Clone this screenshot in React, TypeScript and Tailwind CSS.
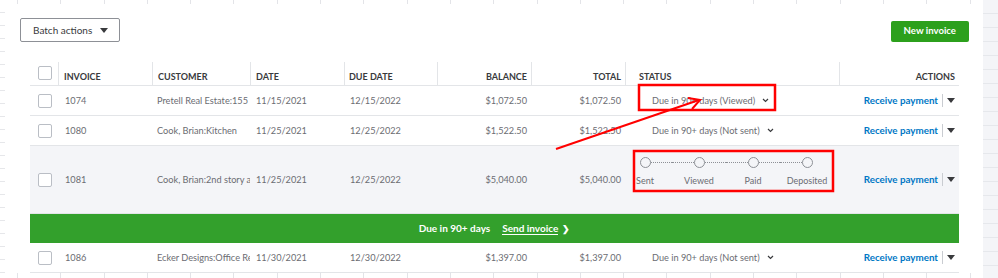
import React from 'react';

const font = { fontFamily: 'Lato, "Liberation Sans", Arial, sans-serif' };

type Row = {
  id: string;
  customer: string;
  date: string;
  due: string;
  balance: string;
  total: string;
  status?: string;
  expanded?: boolean;
};

const rows: Row[] = [
  { id: '1074', customer: 'Pretell Real Estate:155 Main', date: '11/15/2021', due: '12/15/2022', balance: '$1,072.50', total: '$1,072.50', status: 'Due in 90+ days (Viewed)' },
  { id: '1080', customer: 'Cook, Brian:Kitchen', date: '11/25/2021', due: '12/25/2022', balance: '$1,522.50', total: '$1,522.50', status: 'Due in 90+ days (Not sent)' },
  { id: '1081', customer: 'Cook, Brian:2nd story addition', date: '11/25/2021', due: '12/25/2022', balance: '$5,040.00', total: '$5,040.00', expanded: true },
];

const lastRow: Row = { id: '1086', customer: 'Ecker Designs:Office Remodel', date: '11/30/2021', due: '12/30/2022', balance: '$1,397.00', total: '$1,397.00', status: 'Due in 90+ days (Not sent)' };

const Checkbox = () => (
  <div className="h-[14px] w-[14px] rounded-[2px] border border-[#babec5] bg-white" />
);

const Chevron = () => (
  <svg width="7" height="5" viewBox="0 0 7 5" className="ml-[7px] mt-[1px]">
    <polyline points="1,1 3.5,3.5 6,1" fill="none" stroke="#393a3d" strokeWidth="1.2" />
  </svg>
);

const Caret = () => (
  <svg width="8" height="5" viewBox="0 0 8 5">
    <polygon points="0,0 8,0 4,5" fill="#393a3d" />
  </svg>
);

const steps = ['Sent', 'Viewed', 'Paid', 'Deposited'];

const Tracker = () => (
  <div className="-ml-[19px] flex pb-[16px]">
    {steps.map((s, i) => (
      <div key={s} className="flex w-[54px] flex-col items-center">
        <div className="flex w-full items-center">
          <div className={`flex-1 ${i > 0 ? 'border-t border-dotted border-[#8d9096]' : ''}`} />
          <div className="h-[11px] w-[11px] shrink-0 rounded-full border border-[#8d9096] bg-[#f4f5f8]" />
          <div className={`flex-1 ${i < steps.length - 1 ? 'border-t border-dotted border-[#8d9096]' : ''}`} />
        </div>
        <div className="mt-[7px] whitespace-nowrap text-[9px] leading-[11px] text-[#6b6c72]">{s}</div>
      </div>
    ))}
  </div>
);

const TableRow = ({ row }: { row: Row }) => (
  <div
    className={`flex items-center border-b border-[#e3e5e8] text-[9.2px] text-[#6b6c72] ${
      row.expanded ? 'h-[68px] bg-[#f4f5f8]' : 'h-[30px]'
    }`}
  >
    <div className="flex w-[28px] justify-center pl-[2px]">
      <Checkbox />
    </div>
    <div className="w-[94px] pl-[7px]">{row.id}</div>
    <div className="w-[98px] overflow-hidden whitespace-nowrap pl-[5px] pr-[2px]">{row.customer}</div>
    <div className="w-[94px] pl-[6px]">{row.date}</div>
    <div className="w-[93px] pl-[6px]">{row.due}</div>
    <div className="w-[94px] pr-[4px] text-right">{row.balance}</div>
    <div className="w-[94px] pr-[4px] text-right">{row.total}</div>
    <div className="flex w-[214px] items-center pl-[12px]">
      {row.expanded ? (
        <Tracker />
      ) : (
        <div className="flex items-center pl-[15px]">
          {row.status}
          <Chevron />
        </div>
      )}
    </div>
    <div className="flex w-[120px] items-center justify-end pr-[4px]">
      <span className="text-[9.8px] font-bold text-[#0077c5]">Receive payment</span>
      <span className="mx-[4px] h-[13px] w-px bg-[#c9ccd1]" />
      <Caret />
    </div>
  </div>
);

const headers: { label: string; w: string; align: string }[] = [
  { label: 'INVOICE', w: 'w-[94px]', align: 'pl-[5px]' },
  { label: 'CUSTOMER', w: 'w-[98px]', align: 'pl-[5px]' },
  { label: 'DATE', w: 'w-[94px]', align: 'pl-[5px]' },
  { label: 'DUE DATE', w: 'w-[93px]', align: 'pl-[4px]' },
  { label: 'BALANCE', w: 'w-[94px]', align: 'pr-[4px] justify-end' },
  { label: 'TOTAL', w: 'w-[94px]', align: 'pr-[4px] justify-end' },
  { label: 'STATUS', w: 'w-[214px]', align: 'pl-[13px]' },
  { label: 'ACTIONS', w: 'w-[120px]', align: 'pr-[4px] justify-end' },
];

export default function App() {
  return (
    <div className="relative flex h-[278px] w-[998px] overflow-hidden bg-white" style={font}>
      {/* left gridline strip */}
      <div className="w-[5px] bg-[repeating-linear-gradient(to_bottom,transparent_0px,transparent_12px,#e6e7ea_12px,#e6e7ea_13px)]" />

      <div className="flex flex-1 flex-col">
        <div className="h-[4px] bg-[repeating-linear-gradient(to_right,transparent_0px,transparent_12px,#e3e4e8_12px,#e3e4e8_13px,transparent_13px,transparent_43.3px)]" />

        <div className="flex items-start justify-between pl-[15px] pr-[14px] pt-[14px]">
          <button className="flex h-[24px] items-center gap-[8px] rounded-[2px] border border-[#8d9096] bg-white pl-[12px] pr-[11px] text-[10px] text-[#393a3d]">
            Batch actions
            <Caret />
          </button>
          <button className="mt-[3px] flex h-[21px] items-center rounded-[2px] bg-[#2ca01c] px-[13px] text-[9.6px] font-bold text-white">
            New invoice
          </button>
        </div>

        <div className="ml-[25px] mt-[20px] w-[929px]">
          {/* header */}
          <div className="flex h-[24px] border-b border-[#e3e5e8] text-[9px] font-bold leading-none text-[#393a3d]">
            <div className="flex w-[28px] justify-center pb-[4px] pl-[2px] pt-[4px]">
              <Checkbox />
            </div>
            {headers.map((h) => (
              <div key={h.label} className={`flex items-end border-l border-[#e3e5e8] pb-[4px] ${h.w} ${h.align}`}>
                {h.label}
              </div>
            ))}
          </div>

          {rows.map((r) => (
            <TableRow key={r.id} row={r} />
          ))}

          {/* expanded row action bar */}
          <div className="flex h-[29px] items-center justify-center gap-[12px] bg-[#33a02c] text-[10px] font-bold text-white">
            <span>Due in 90+ days</span>
            <span className="flex items-center gap-[4px]">
              <span className="border-b border-white leading-[12px]">Send invoice</span>
              <span className="text-[9px]">❯</span>
            </span>
          </div>

          <TableRow row={lastRow} />
        </div>

        <div className="flex-1 bg-[repeating-linear-gradient(to_right,transparent_0px,transparent_12px,#e3e4e8_12px,#e3e4e8_13px,transparent_13px,transparent_43.3px)]" />
      </div>

      {/* right gray strip */}
      <div className="w-[15px] bg-[#f4f5f8] bg-[repeating-linear-gradient(to_bottom,#f4f5f8_0px,#f4f5f8_13px,#e6e8ec_13px,#e6e8ec_14px)]" />

      {/* red annotations */}
      <svg className="pointer-events-none absolute left-0 top-0" width="998" height="278">
        <rect x="639" y="85" width="136" height="25" fill="none" stroke="#ff0000" strokeWidth="2.5" />
        <rect x="634" y="151" width="199" height="40" fill="none" stroke="#ff0000" strokeWidth="2.5" />
        <line x1="556" y1="149" x2="699" y2="100" stroke="#ff0000" strokeWidth="2" />
        <polyline points="688,98 700,100 692,109" fill="none" stroke="#ff0000" strokeWidth="2" />
      </svg>
    </div>
  );
}
